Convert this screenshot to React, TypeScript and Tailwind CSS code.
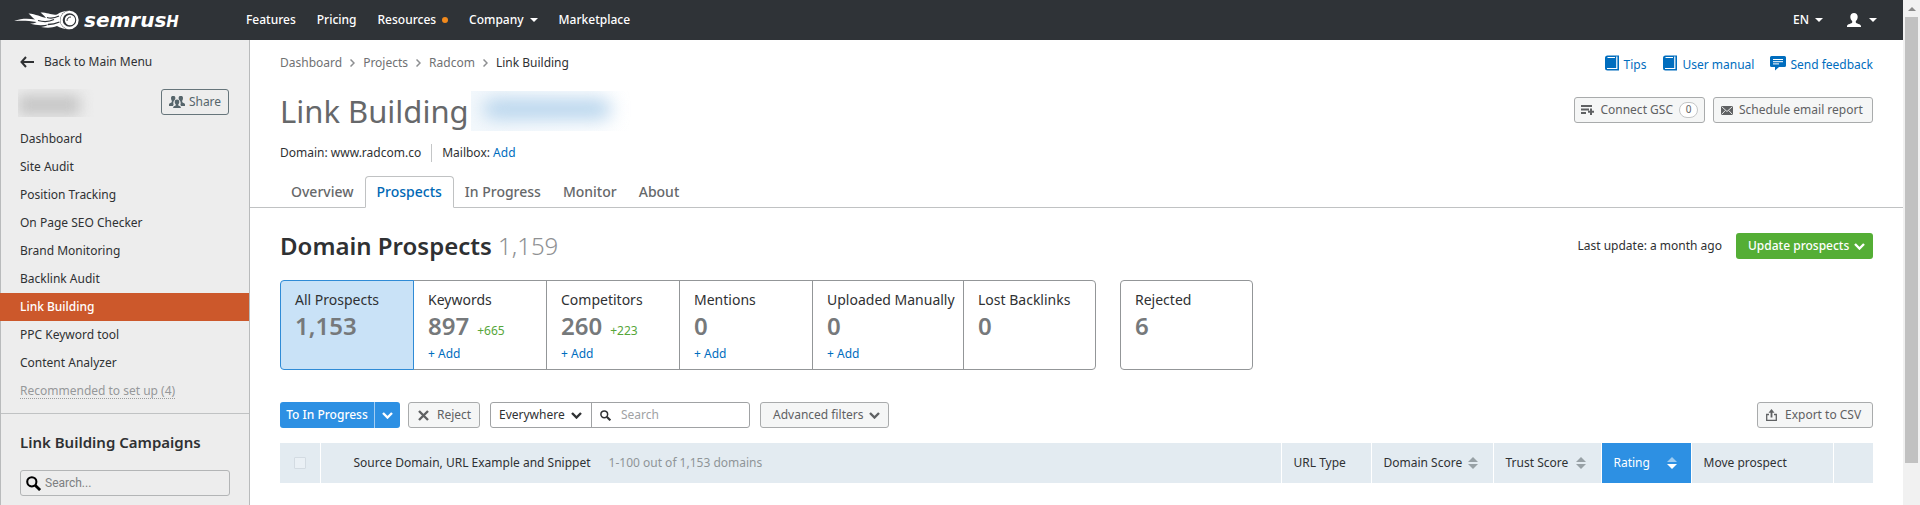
import { clsx } from "clsx";
import type { ReactNode } from "react";

const topNav = [
  { label: "Features" },
  { label: "Pricing" },
  { label: "Resources", dot: true },
  { label: "Company", caret: true },
  { label: "Marketplace" },
];

const sideNav = [
  "Dashboard",
  "Site Audit",
  "Position Tracking",
  "On Page SEO Checker",
  "Brand Monitoring",
  "Backlink Audit",
  "Link Building",
  "PPC Keyword tool",
  "Content Analyzer",
];

const tabs = ["Overview", "Prospects", "In Progress", "Monitor", "About"];

interface Stat {
  label: string;
  value: string;
  delta?: string;
  add?: boolean;
  width: string;
}

const stats: Stat[] = [
  { label: "All Prospects", value: "1,153", width: "w-[134px]" },
  {
    label: "Keywords",
    value: "897",
    delta: "+665",
    add: true,
    width: "w-[134px]",
  },
  {
    label: "Competitors",
    value: "260",
    delta: "+223",
    add: true,
    width: "w-[134px]",
  },
  { label: "Mentions", value: "0", add: true, width: "w-[134px]" },
  { label: "Uploaded Manually", value: "0", add: true, width: "w-[152px]" },
  { label: "Lost Backlinks", value: "0", width: "w-[133px]" },
];

const rejected: Stat = { label: "Rejected", value: "6", width: "w-[133px]" };

function Logo() {
  return (
    <a
      aria-label="semrush"
      className="flex h-10 w-[232px] items-center gap-[5px] pl-3.5 text-white"
      href="#home"
    >
      <svg className="h-5 w-[65px]" fill="none" viewBox="0 0 65 20">
        <path
          d="M0 11C8 8 15 8.500 21 9.500C18 7.500 17 5.500 14.500 3.500C22 4 27 7 32 8C30 5.500 28.500 4 26.500 2.500C34 2.500 38 5.500 43 4.500C47 1.500 52 0.500 56 0.800L59 18.800C53 20 47 18.500 43 16C38 18 33 18 27 17C31 16.500 33 15.500 34.500 14.500C28 15.500 22 15.500 16 13.500C19 13.500 21 13 22.500 12C14 10.500 8 10.500 0 11Z"
          fill="currentColor"
        />
        <path
          d="M24 10.500C31 12.500 35 12 40 9.500M33 7.500C38 9 41 8 45 6M34 14.500C39 14.500 42 13.500 45.500 12"
          stroke="#2f3337"
          strokeWidth="1.300"
        />
        <circle cx="55.500" cy="10" fill="#2f3337" r="9.500" />
        <circle
          cx="55.500"
          cy="10"
          r="8"
          stroke="currentColor"
          strokeWidth="2.400"
        />
        <circle cx="56" cy="10" fill="currentColor" r="5.200" />
        <path
          d="M53 10.500C53 8.500 54.500 7 56.500 7"
          stroke="#2f3337"
          strokeLinecap="round"
          strokeWidth="1"
        />
      </svg>
      <span className="font-['DejaVu_Sans'] font-bold text-xl italic leading-none">
        semrus<span className="text-[15px] uppercase">h</span>
      </span>
    </a>
  );
}

function Caret() {
  return (
    <svg className="h-1 w-2" fill="currentColor" viewBox="0 0 8 4">
      <path d="M0 0h8L4 4z" />
    </svg>
  );
}

function Chevron({ className }: { className?: string }) {
  return (
    <svg
      className={clsx("h-[7px] w-[11px] shrink-0", className)}
      fill="none"
      stroke="currentColor"
      strokeWidth="2.400"
      viewBox="0 0 11 7"
    >
      <path d="M1 1l4.500 4.500L10 1" />
    </svg>
  );
}

function SearchIcon({ className }: { className?: string }) {
  return (
    <svg
      className={className}
      fill="none"
      stroke="currentColor"
      viewBox="0 0 16 16"
    >
      <circle cx="6.200" cy="6.200" r="4.900" strokeWidth="2.200" />
      <path d="M9.800 9.800l5.200 5.200" strokeWidth="3" />
    </svg>
  );
}

function BookIcon() {
  return (
    <svg className="mb-1 size-4" viewBox="0 0 16 16">
      <path
        d="M3.500 0.500h11.500v15H3.500a2.500 2.500 0 0 1-2.500-2.500V3a2.500 2.500 0 0 1 2.500-2.500z"
        fill="#006dbe"
      />
      <path d="M3.500 2.500h7.500" stroke="#fff" strokeWidth="1" />
      <path
        d="M3 13.500h9.800V1.500"
        fill="none"
        stroke="#fff"
        strokeWidth="1.200"
      />
    </svg>
  );
}

function FeedbackIcon() {
  return (
    <svg className="mb-1 size-4" viewBox="0 0 16 16">
      <path
        d="M1.500 1h13A1.500 1.500 0 0 1 16 2.500v8a1.500 1.500 0 0 1-1.500 1.500H9l-4 3.500V12H1.500A1.500 1.500 0 0 1 0 10.500v-8A1.500 1.500 0 0 1 1.500 1z"
        fill="#006dbe"
      />
      <path d="M3 4.500h10M3 6.700h10M3 8.900h6" stroke="#fff" strokeWidth="1" />
    </svg>
  );
}

function PeopleIcon() {
  return (
    <svg className="h-3 w-4" fill="currentColor" viewBox="0 0 16 12">
      <path d="M2 2a2.200 2.200 0 0 1 4.400 0c0 .9-.3 1.800-.9 2.300C4.300 5.200 4 7 4.600 8.600L4 10H0V8.200C0 7 2.800 6.800 2.800 6V4.700C2.200 4 2 3 2 2z" />
      <path d="M14 2a2.200 2.200 0 0 0-4.400 0c0 .9.300 1.800.9 2.300 1.200.9 1.500 2.700.9 4.300L12 10h4V8.200C16 7 13.200 6.800 13.200 6V4.700C13.800 4 14 3 14 2z" />
      <path d="M5.700 5.800a2.300 2.300 0 0 1 4.600 0c0 1-.4 2-1 2.500v.9c0 .7 2.500.7 2.500 2V12H4.200v-.8c0-1.300 2.500-1.300 2.500-2v-.9c-.6-.5-1-1.500-1-2.500z" />
    </svg>
  );
}

function SortIcon({ active }: { active?: boolean }) {
  return (
    <svg className="h-3 w-2.5 shrink-0" viewBox="0 0 10 12">
      <path d="M0 5h10L5 0z" fill={active ? "#9ccbf2" : "#98a1a6"} />
      <path d="M0 7h10l-5 5z" fill={active ? "#fff" : "#98a1a6"} />
    </svg>
  );
}

function Button({
  children,
  className,
}: {
  children: ReactNode;
  className?: string;
}) {
  return (
    <button
      className={clsx(
        "flex h-[26px] items-center rounded-[3px] border border-[#a9abac] bg-[#f5f6f6] text-[#5f6163]",
        className
      )}
      type="button"
    >
      {children}
    </button>
  );
}

function StatCard({ stat, active }: { stat: Stat; active?: boolean }) {
  return (
    <div
      className={clsx(
        "-ml-px flex h-[90px] flex-col border px-3.5 pt-[9px] first:ml-0 first:rounded-l last:rounded-r",
        stat.width,
        active
          ? "relative z-10 border-[#2f8bd6] bg-[#c9e2f7]"
          : "border-[#939698]"
      )}
    >
      <span className="whitespace-nowrap text-sm leading-5">{stat.label}</span>
      <span className="flex items-baseline gap-2 font-semibold text-2xl text-[#76797b]">
        {stat.value}
        {stat.delta && (
          <span className="font-normal text-[#56a63a] text-xs">
            {stat.delta}
          </span>
        )}
      </span>
      {stat.add && (
        <a className="mt-0.5 text-[#006dbe] text-xs leading-5" href="#add">
          + Add
        </a>
      )}
    </div>
  );
}

function Header() {
  return (
    <header className="flex h-10 items-center bg-[#2f3337] font-medium text-white text-xs">
      <Logo />
      <nav className="flex items-center gap-[21px] pl-3.5">
        {topNav.map((item) => (
          <a className="flex items-center" href="#nav" key={item.label}>
            {item.label}
            {item.dot && (
              <span className="ml-1.5 size-1.5 rounded-full bg-[#f28a1c]" />
            )}
            {item.caret && (
              <span className="ml-1.5">
                <Caret />
              </span>
            )}
          </a>
        ))}
      </nav>
      <div className="ml-auto flex items-center gap-6 pr-[26px]">
        <button className="flex items-center gap-1.5" type="button">
          EN <Caret />
        </button>
        <button
          aria-label="Account"
          className="flex items-center gap-2"
          type="button"
        >
          <svg className="size-3.5" fill="currentColor" viewBox="0 0 14 14">
            <path d="M3.300 3.700C3.300 1.600 4.900 0 7 0s3.700 1.600 3.700 3.700c0 1.700-.7 3.400-1.900 4.400v1.300c0 1 5.200 1.500 5.200 3.600v1H0v-1c0-2.100 5.200-2.600 5.200-3.600V8.100C4 7.100 3.300 5.400 3.300 3.700z" />
          </svg>
          <Caret />
        </button>
      </div>
    </header>
  );
}

function Sidebar() {
  return (
    <aside className="w-[250px] shrink-0 border-[#b9bbbc] border-x bg-[#ededed]">
      <a
        className="flex h-11 items-center gap-2.5 pl-[19px]"
        href="#main-menu"
      >
        <svg
          className="h-3 w-3.5"
          fill="none"
          stroke="currentColor"
          strokeWidth="2"
          viewBox="0 0 14 12"
        >
          <path d="M6 1L1.500 6 6 11M1.500 6H14" />
        </svg>
        Back to Main Menu
      </a>
      <div className="flex items-start justify-between pt-[5px] pr-5 pl-[17px]">
        <div className="h-7 w-[76px] overflow-hidden">
          <div className="mt-1.5 h-5 w-[62px] bg-[#c6c6c6] blur-[7px]" />
        </div>
        <button
          className="flex h-[26px] w-[68px] items-center justify-center gap-1 rounded-[3px] border border-[#66757b] text-[#56656b]"
          type="button"
        >
          <PeopleIcon />
          Share
        </button>
      </div>
      <nav className="pt-2">
        {sideNav.map((item) => (
          <a
            className={clsx(
              "flex h-7 items-center",
              item === "Link Building"
                ? "-ml-px bg-[#cc582b] pl-5 font-medium text-white"
                : "pl-[19px]"
            )}
            href="#tool"
            key={item}
          >
            {item}
          </a>
        ))}
        <div className="flex h-7 items-center pl-[19px]">
          <a
            className="border-[#9a9c9d] border-b border-dotted text-[#96989a] leading-[14px]"
            href="#setup"
          >
            Recommended to set up (4)
          </a>
        </div>
      </nav>
      <div className="mt-2 border-[#c0c2c3] border-t px-[19px] pt-4">
        <h2 className="font-semibold text-[15px] leading-6">
          Link Building Campaigns
        </h2>
        <label className="mt-4 flex h-[26px] items-center gap-1 rounded-[3px] border border-[#b3b5b6] px-[5px]">
          <SearchIcon className="size-[15px] shrink-0 text-black" />
          <input
            aria-label="Search campaigns"
            className="w-full min-w-0 bg-transparent font-['Roboto'] outline-none placeholder:text-[#7d7f81]"
            placeholder="Search..."
            type="search"
          />
        </label>
      </div>
    </aside>
  );
}

function PageHead() {
  return (
    <div className="flex justify-between px-[30px] pt-3">
      <div>
        <ol className="flex items-center gap-2 text-[#6f7173] leading-[22px]">
          {["Dashboard", "Projects", "Radcom"].map((crumb) => (
            <li className="flex items-center gap-2" key={crumb}>
              <a href="#crumb">{crumb}</a>
              <svg
                className="h-2 w-[5px]"
                fill="none"
                stroke="#8d8f91"
                strokeWidth="1.500"
                viewBox="0 0 5 8"
              >
                <path d="M0.500 0.500L4 4 0.500 7.500" />
              </svg>
            </li>
          ))}
          <li className="text-[#2f3133]">Link Building</li>
        </ol>
        <div className="mt-3.5 flex h-[46px] items-center">
          <h1 className="text-[#66686a] text-[31px] leading-[46px]">
            Link Building
          </h1>
          <div className="ml-0.5 h-10 w-40 overflow-hidden bg-linear-to-r from-[#f3f8fc] to-white">
            <div className="mt-2 ml-3 h-5 w-32 rounded-full bg-[#b5d3ec] blur-[9px]" />
          </div>
        </div>
        <div className="mt-2.5 flex items-center">
          <span className="border-[#c4c6c7] border-r pr-2.5 leading-[18px]">
            Domain: www.radcom.co
          </span>
          <span className="pl-2.5">
            Mailbox:{" "}
            <a className="text-[#006dbe]" href="#mailbox">
              Add
            </a>
          </span>
        </div>
      </div>
      <div className="flex flex-col items-end">
        <div className="flex h-[26px] items-center gap-4 text-[#006dbe]">
          <a className="flex items-center gap-1" href="#tips">
            <BookIcon />
            Tips
          </a>
          <a className="flex items-center gap-1" href="#manual">
            <BookIcon />
            User manual
          </a>
          <a className="flex items-center gap-1" href="#feedback">
            <FeedbackIcon />
            Send feedback
          </a>
        </div>
        <div className="mt-[19px] flex gap-2">
          <Button className="px-1.5">
            <svg
              className="mr-1.5 h-2.5 w-[13px]"
              fill="none"
              stroke="currentColor"
              strokeWidth="2"
              viewBox="0 0 13 10"
            >
              <path d="M0 1h11M0 4.500h8M0 8h5M10 3.500v6.500M7 6.700h6" />
            </svg>
            Connect GSC
            <span className="ml-1.5 flex h-4 w-[19px] items-center justify-center rounded-full border border-[#c4c6c7] bg-white text-[10px]">
              0
            </span>
          </Button>
          <Button className="w-40 gap-1.5 px-[7px]">
            <svg className="h-[9px] w-3" viewBox="0 0 12 9">
              <path d="M0 0h12v9H0z" fill="currentColor" />
              <path
                d="M0.500 0.500L6 5.500l5.500-5M0.500 8.500L4.300 4.500M11.500 8.500L7.700 4.500"
                fill="none"
                stroke="#f5f6f6"
                strokeWidth="0.900"
              />
            </svg>
            Schedule email report
          </Button>
        </div>
      </div>
    </div>
  );
}

function Toolbar() {
  return (
    <div className="mt-8 flex items-center">
      <div className="flex h-[26px] w-[120px] overflow-hidden rounded-[3px] bg-[#2d90e3] font-medium text-white">
        <button className="flex-1 whitespace-nowrap" type="button">
          To In Progress
        </button>
        <button
          aria-label="More actions"
          className="flex w-[26px] items-center justify-center border-[#a3cdf2] border-l"
          type="button"
        >
          <Chevron />
        </button>
      </div>
      <Button className="ml-2 w-[72px] gap-2 pl-[9px]">
        <svg
          className="size-[11px] shrink-0"
          stroke="currentColor"
          strokeWidth="2.400"
          viewBox="0 0 11 11"
        >
          <path d="M1 1l9 9M10 1l-9 9" />
        </svg>
        Reject
      </Button>
      <div className="ml-2.5 flex h-[26px] w-[260px] rounded-[3px] border border-[#a0a2a4]">
        <div className="relative w-[101px] border-[#a0a2a4] border-r">
          <select
            aria-label="Search in"
            className="size-full appearance-none bg-transparent pl-2 outline-none"
          >
            <option>Everywhere</option>
          </select>
          <Chevron className="pointer-events-none absolute top-[9px] right-[9px]" />
        </div>
        <label className="flex flex-1 items-center gap-2.5 pl-2">
          <SearchIcon className="size-[11px] shrink-0" />
          <input
            aria-label="Search prospects"
            className="w-full min-w-0 bg-transparent outline-none placeholder:text-[#a0a2a4]"
            placeholder="Search"
            type="search"
          />
        </label>
      </div>
      <Button className="ml-2.5 w-[129px] justify-between pr-2 pl-3">
        Advanced filters
        <Chevron />
      </Button>
      <Button className="ml-auto w-[116px] gap-2 pl-2">
        <svg
          className="h-3 w-[11px] shrink-0"
          fill="none"
          stroke="currentColor"
          viewBox="0 0 11 12"
        >
          <path d="M3 5.500H0.700v5.800h9.600V5.500H8" strokeWidth="1.300" />
          <path d="M5.500 8.500V3" strokeWidth="1.800" />
          <path d="M2.500 3.800h6L5.500 0z" fill="currentColor" stroke="none" />
        </svg>
        Export to CSV
      </Button>
    </div>
  );
}

function ProspectsTable() {
  const cell = "h-10 border-white border-l p-0 pl-3 font-normal";
  return (
    <table className="mt-[15px] w-full table-fixed bg-[#e3ebf1] text-left">
      <thead>
        <tr>
          <th className="h-10 w-10 p-0">
            <input
              aria-label="Select all"
              className="mx-auto block size-3 appearance-none rounded-[1px] border border-[#d3dbe2] bg-[#eaf0f5]"
              type="checkbox"
            />
          </th>
          <th className="h-10 border-white border-l p-0 pl-[33px] font-normal">
            Source Domain, URL Example and Snippet
            <span className="ml-[18px] text-[#8f9598]">
              1-100 out of 1,153 domains
            </span>
          </th>
          <th className={clsx(cell, "w-[90px]")}>URL Type</th>
          <th className={clsx(cell, "w-[122px]")}>
            <span className="flex items-center gap-1.5">
              Domain Score <SortIcon />
            </span>
          </th>
          <th className={clsx(cell, "w-[108px]")}>
            <span className="flex items-center gap-2">
              Trust Score <SortIcon />
            </span>
          </th>
          <th
            className={clsx(
              cell,
              "w-[90px] bg-[#2d90e3] pr-3.5 font-medium text-white"
            )}
          >
            <span className="flex items-center justify-between">
              Rating <SortIcon active />
            </span>
          </th>
          <th className={clsx(cell, "w-[142px]")}>Move prospect</th>
          <th className="w-10 border-white border-l" />
        </tr>
      </thead>
    </table>
  );
}

export default function App() {
  return (
    <div className="flex min-h-screen bg-white font-['Noto_Sans',sans-serif] text-[#2f3133] text-xs">
      <div className="flex min-w-0 flex-1 flex-col">
        <Header />
        <div className="flex flex-1">
          <Sidebar />
          <main className="min-w-0 flex-1">
            <PageHead />
            <nav className="mt-3.5 flex h-8 font-medium text-[#66686a] text-sm">
              <span className="w-[30px] border-[#c0c2c3] border-b" />
              {tabs.map((tab) => (
                <a
                  className={clsx(
                    "flex items-center border-[#c0c2c3] px-[11px]",
                    tab === "Prospects"
                      ? "rounded-t border border-b-white text-[#0068b5]"
                      : "border-b"
                  )}
                  href="#tab"
                  key={tab}
                >
                  {tab}
                </a>
              ))}
              <span className="flex-1 border-[#c0c2c3] border-b" />
            </nav>
            <section className="px-[30px] pt-[25px]">
              <div className="flex h-[26px] items-center justify-between">
                <h2 className="font-semibold text-2xl">
                  Domain Prospects{" "}
                  <span className="font-light text-[#8f9193]">1,159</span>
                </h2>
                <div className="flex items-center gap-3.5">
                  <span>Last update: a month ago</span>
                  <button
                    className="flex h-[26px] w-[137px] items-center justify-between rounded-[3px] bg-[#54ae35] pr-2 pl-3 font-medium text-white"
                    type="button"
                  >
                    Update prospects
                    <Chevron />
                  </button>
                </div>
              </div>
              <div className="mt-[21px] flex gap-6">
                <div className="flex">
                  {stats.map((stat, i) => (
                    <StatCard active={i === 0} key={stat.label} stat={stat} />
                  ))}
                </div>
                <div className="flex">
                  <StatCard stat={rejected} />
                </div>
              </div>
              <Toolbar />
              <ProspectsTable />
            </section>
          </main>
        </div>
      </div>
      {/* Scroll track */}
      <div className="flex w-[17px] shrink-0 flex-col items-center bg-[#f1f1f1]">
        <svg className="h-[17px] w-2" fill="#8a8a8a" viewBox="0 0 8 17">
          <path d="M0 11h8L4 7z" />
        </svg>
        <div className="h-[446px] w-[13px] bg-[#c1c1c1]" />
      </div>
    </div>
  );
}
